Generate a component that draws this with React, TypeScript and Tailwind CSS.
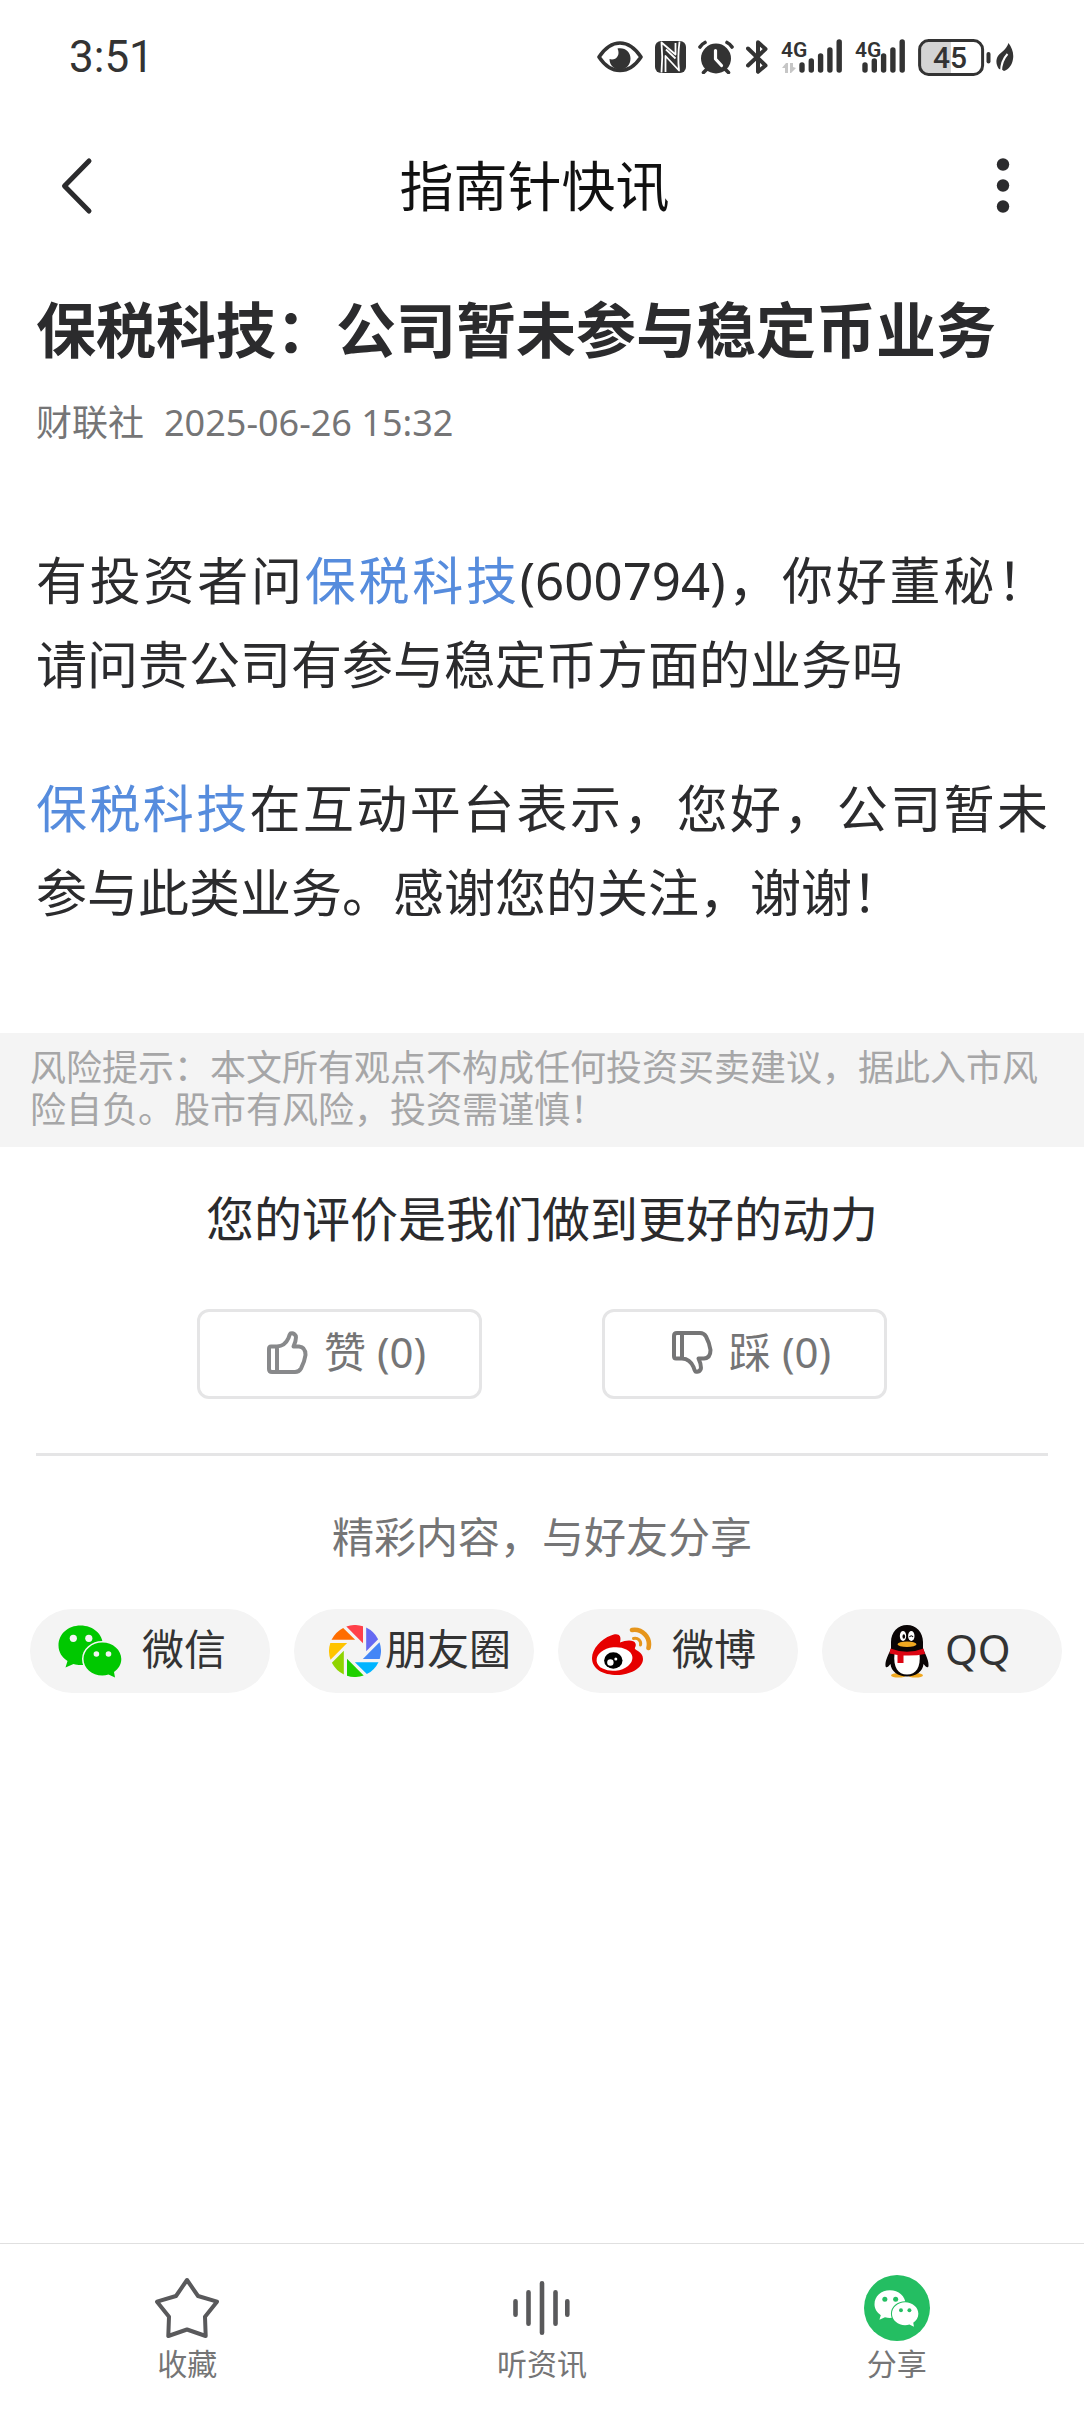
import type { ReactNode } from 'react'

const bladeColors = [
  '#ff4049',
  '#6669f2',
  '#4486f6',
  '#00b4ff',
  '#1fd000',
  '#8fd400',
  '#ffc400',
  '#ff6d00',
]

/* --- Status bar icons --- */

const EyeIcon = () => (
  <svg width="46" height="34" viewBox="598 40 46 34" fill="none" aria-hidden="true">
    <path
      d="M600 57 C606 48 613 43 621 43 S636 48 642 57 C636 66 629 70.500 621 70.500 S606 66 600 57Z"
      stroke="#333"
      strokeWidth="3.6"
      strokeLinejoin="round"
    />
    <path
      d="M618.500 48.500 C626 47 631.500 52 631.500 58.500 C631.500 65 627 69.500 621 69.500 C615 69.500 610.500 65 610.500 59 C616 61 622 56 618.500 48.500Z"
      fill="#333"
    />
  </svg>
)

const NfcIcon = () => (
  <svg width="31" height="32" viewBox="0 0 31 32" fill="none" aria-hidden="true">
    <rect width="31" height="32" rx="6" fill="#333" />
    <g stroke="#fff" strokeWidth="1.800" strokeLinejoin="round">
      <path d="M6.500 31.500 Q8 16 6.500 1.500 L20.500 13.500 V2" />
      <path d="M10.500 31 V15 L24 29.500 Q22.500 16 24.500 .5" />
      <path d="M11 8.500 L20.500 17.500" />
    </g>
  </svg>
)

const AlarmIcon = () => (
  <svg width="36" height="34" viewBox="699 39 36 34" fill="none" aria-hidden="true">
    <circle cx="717" cy="57.500" r="15" fill="#333" />
    <path
      d="M701 46 Q703 43 706 41.500 M728 41.500 Q731 43 733 46 M704.500 71.500 L708 68 M729.500 71.500 L726 68"
      stroke="#333"
      strokeWidth="3.6"
      strokeLinecap="round"
    />
    <path d="M716.500 49.500 V58 L722.500 64.500" stroke="#fff" strokeWidth="3.2" strokeLinecap="round" strokeLinejoin="round" />
  </svg>
)

const BluetoothIcon = () => (
  <svg width="23" height="34" viewBox="747 39 23 34" fill="none" aria-hidden="true">
    <path
      d="M749 47.500 L766.500 64.500 L759 70.800 V41.200 L766.500 48 L749 64.500"
      stroke="#333"
      strokeWidth="4"
      strokeLinecap="round"
      strokeLinejoin="round"
    />
  </svg>
)

const SignalIcon = ({ offset, arrows }: { offset: number; arrows?: boolean }) => (
  <svg
    className="overflow-visible"
    width={offset + 44}
    height="36"
    viewBox={`0 0 ${offset + 44} 36`}
    fill="none"
    aria-hidden="true"
  >
    <text x="0" y="18" fontFamily="Roboto" fontSize="21" fontWeight="600" fill="#333">
      4G
    </text>
    {arrows && (
      <path d="M1 29 L5 24 H7 V34 H4 V29Z M9 24 H12 V28 L15 29 L10 34 H9Z" fill="#c6c6c6" />
    )}
    <g stroke="#333" strokeWidth="5.400" strokeLinecap="round">
      {[26, 22, 17, 11, 3].map((top, i) => (
        <path key={top} d={`M${offset + 3 + i * 9.3} ${top} V31`} />
      ))}
    </g>
  </svg>
)

const BatteryIcon = () => (
  <svg width="74" height="37" viewBox="917 37 74 37" fill="none" aria-hidden="true">
    <path d="M950 40 H927 Q920 40 920 47 V64 Q920 72 927 72 H950Z" fill="#d4d4d4" />
    <rect x="918.600" y="38.600" width="63" height="33.800" rx="9" stroke="#333" strokeWidth="3" />
    <path d="M987.500 52 V59.500" stroke="#333" strokeWidth="4" strokeLinecap="round" />
    <text x="949" y="66" textAnchor="middle" fontFamily="Roboto" fontSize="30" fontWeight="500" fill="#333">
      45
    </text>
  </svg>
)

const LeafIcon = () => (
  <svg width="19" height="29" viewBox="996 41 19 29" fill="none" aria-hidden="true">
    <path
      d="M1008.500 41 C1012 46 1014 51 1013 57 C1012 63 1009 67 1004 69 L1002.500 68 L999 67 C996 63 995.500 58 998 54 C1001 50 1006 48 1008.500 41Z"
      fill="#333"
    />
    <path d="M1007.500 52 Q1001 59 1001 70" stroke="#fff" strokeWidth="2" />
  </svg>
)

/* --- Content icons --- */

const ThumbIcon = ({ color, down }: { color: string; down?: boolean }) => (
  <svg width="42" height="43" viewBox="0 0 42 43" fill="none" aria-hidden="true">
    <path
      transform={down ? 'matrix(1 0 0 -1 0 43)' : undefined}
      d="M11 15.500 H5 Q3 15.500 3 18 V38 Q3 41 6 41 H29 Q33 41 35 37.500 Q38.500 31 39.500 24 Q39.500 16 33 15.500 H27.500 Q30.500 9 29.800 5 Q28 1.500 24.500 2.500 Q23.500 3.500 22.500 7 Q19 15 11 15.500 V41"
      stroke={color}
      strokeWidth="4"
      strokeLinejoin="round"
    />
  </svg>
)

const WechatIcon = ({ color, gap, className }: { color: string; gap: string; className: string }) => (
  <svg className={className} viewBox="0 0 64 53" fill="none" aria-hidden="true">
    <path
      d="M22.500 .5 C35 .5 45 9 45 20.500 C45 32 35 40 22.500 40 C20 40 18 39.700 15.500 39 L7.500 42.500 L9.500 36 C4 32.500 .5 27 .5 20.500 C.5 9 10 .5 22.500 .5Z"
      fill={color}
    />
    <circle cx="15.300" cy="13.300" r="3.600" fill={gap} />
    <circle cx="30.800" cy="13.300" r="3.600" fill={gap} />
    <path
      d="M44.300 17.500 C55 17.500 63.300 25 63.300 34 C63.300 39.500 60.300 44 56 47 L57 52.500 L50.500 49.500 C48.500 50.200 46.500 50.500 44.300 50.500 C34 50.500 25.500 43 25.500 34 C25.500 25 34 17.500 44.300 17.500Z"
      fill={color}
      stroke={gap}
      strokeWidth="3"
      paintOrder="stroke"
    />
    <circle cx="38.400" cy="29" r="2.800" fill={gap} />
    <circle cx="50.500" cy="29" r="2.800" fill={gap} />
  </svg>
)

const MomentsIcon = () => (
  <svg width="52" height="52" viewBox="-26 -26 52 52" aria-hidden="true">
    {bladeColors.map((color, i) => (
      <path
        key={color}
        transform={`rotate(${i * 45})`}
        d="M8 -24.700 V-7.800 L-8.700 -24.500 A26 26 0 0 1 8 -24.700Z"
        fill={color}
      />
    ))}
  </svg>
)

const WeiboIcon = () => (
  <svg width="60" height="49" viewBox="0 0 60 49" fill="none" aria-hidden="true">
    <path
      d="M0 31 C0 22 9 12 19 8.500 C26 5.500 30 8 28 15.500 C34 13 42 12.500 43.500 16.500 C44.500 19 42.500 20.500 43 22 C44 23.500 51 25 51 32 C51 41 38 48 25 48 C11 48 0 42 0 31Z"
      fill="#e60000"
    />
    <ellipse cx="22.500" cy="32" rx="18" ry="11.700" transform="rotate(-6 22.500 32)" fill="#fff" />
    <ellipse cx="21.300" cy="33.500" rx="9.200" ry="8.200" fill="#000" />
    <circle cx="18.400" cy="35.500" r="3.200" fill="#fff" />
    <circle cx="23.800" cy="32" r="1.500" fill="#fff" />
    <path d="M40 3 C50 1.500 59 10 56.500 21" stroke="#e6951b" strokeWidth="4.600" strokeLinecap="round" />
    <path d="M41.500 11.500 C46 10.500 49.500 14 48.500 18" stroke="#e6951b" strokeWidth="3" strokeLinecap="round" />
  </svg>
)

const QqIcon = () => (
  <svg width="44" height="53" viewBox="0 0 44 53" fill="none" aria-hidden="true">
    <ellipse cx="13.500" cy="50.300" rx="7.500" ry="2.300" fill="#f0a820" />
    <ellipse cx="30.500" cy="50.300" rx="7.500" ry="2.300" fill="#f0a820" />
    <path
      d="M22 0 C31 0 38 7 38 17 V24 C41 30 44 36 43.500 41 C43 44 40 41 38.500 39 C38 46 31 51.500 22 51.500 C13 51.500 6 46 5.500 39 C4 41 1 44 .5 41 C0 36 3 30 6 24 V17 C6 7 13 0 22 0Z"
      fill="#0a0505"
    />
    <path d="M9.500 29 H34.500 C36 42 31 49.500 22 49.500 C13 49.500 8 42 9.500 29Z" fill="#fff" />
    <path d="M5.500 23.500 Q22 30 38.500 23.500 L40 29 Q31 31 18.500 30.500 V38 H12.500 V30 L4.500 28.500Z" fill="#dc0512" />
    <ellipse cx="18" cy="11" rx="3.200" ry="5" fill="#fff" />
    <ellipse cx="26.300" cy="11" rx="3.200" ry="5" fill="#fff" />
    <ellipse cx="18.800" cy="11.500" rx="1.300" ry="2.200" fill="#0a0505" />
    <path d="M24.500 12 Q26.300 9.500 28 12" stroke="#0a0505" strokeWidth="1.200" />
    <ellipse cx="22" cy="19.300" rx="9.500" ry="2.800" fill="#f0a820" />
  </svg>
)

const StarIcon = () => (
  <svg width="64" height="62" viewBox="0 0 64 62" fill="none" aria-hidden="true">
    <path
      d="M32 3 L43 19 L62 24.700 L50 39.700 L50.700 59 L32 52.500 L13.300 59 L14 39.700 L2 24.700 L21 19Z"
      stroke="#59595b"
      strokeWidth="4"
      strokeLinejoin="round"
    />
  </svg>
)

const ListenIcon = () => (
  <svg width="57" height="54" viewBox="0 0 57 54" aria-hidden="true">
    <g stroke="#59595b" strokeWidth="4.600" strokeLinecap="round">
      <path d="M2.500 20.300 V33.700 M15.500 11.300 V42.700 M29 2.300 V51.700 M42.500 11.300 V42.700 M54.300 20.300 V33.700" />
    </g>
  </svg>
)

/* --- Data --- */

const shareTargets = [
  { label: '微信', icon: <WechatIcon color="#00c800" gap="#f4f4f4" className="h-[53px] w-16" />, layout: 'pl-7 gap-5' },
  { label: '朋友圈', icon: <MomentsIcon />, layout: 'pl-[35px] gap-1' },
  { label: '微博', icon: <WeiboIcon />, layout: 'pl-[34px] gap-5' },
  { label: 'QQ', icon: <QqIcon />, layout: 'pl-[63px] gap-4' },
]

const tabs = [
  { label: '收藏', icon: <StarIcon /> },
  { label: '听资讯', icon: <ListenIcon /> },
  {
    label: '分享',
    icon: (
      <span className="flex size-[66px] items-center justify-center rounded-full bg-[#24be62]">
        <WechatIcon color="#fff" gap="#24be62" className="h-[37px] w-[45px]" />
      </span>
    ),
  },
]

const StockLink = ({ children }: { children: ReactNode }) => (
  <a href="#600794" className="text-[#568cdd]">
    {children}
  </a>
)

const VoteButton = ({ icon, children }: { icon: ReactNode; children: ReactNode }) => (
  <button
    type="button"
    className="flex h-[90px] w-[285px] items-center gap-4 rounded-xl border-3 border-[#e5e5e6] pb-1 pl-[66px] text-[42px] leading-[60px] text-[#757576]"
  >
    {icon}
    {children}
  </button>
)

export default function App() {
  return (
    <div
      lang="zh-CN"
      className="flex min-h-screen flex-col bg-white font-['Noto_Sans','Noto_Sans_CJK_SC',sans-serif] text-[#2b2b2d]"
    >
      {/* Status bar */}
      <div className="flex h-[114px] items-center justify-between px-[69px]">
        <span className="font-['Roboto',sans-serif] text-[44px] leading-[60px] text-[#333]">3:51</span>
        <div className="flex items-center gap-3">
          <EyeIcon />
          <NfcIcon />
          <AlarmIcon />
          <BluetoothIcon />
          <SignalIcon offset={18} arrows />
          <SignalIcon offset={7} />
          <div className="flex items-center gap-1">
            <BatteryIcon />
            <LeafIcon />
          </div>
        </div>
      </div>

      <header className="flex h-36 items-center pl-[60px] pr-[66px]">
        <button type="button" aria-label="返回" className="flex w-[60px]">
          <svg width="34" height="58" viewBox="60 156 34 58" fill="none" aria-hidden="true">
            <path
              d="M89 160 L64.500 185 L89 210"
              stroke="#2b2b2d"
              strokeWidth="5"
              strokeLinecap="round"
              strokeLinejoin="round"
            />
          </svg>
        </button>
        <h1 className="flex-1 text-center text-[54px] leading-[72px] text-[#111]">指南针快讯</h1>
        <button type="button" aria-label="更多" className="flex w-[69px] justify-end pr-2">
          <svg width="14" height="56" viewBox="0 0 14 56" fill="#2b2b2d" aria-hidden="true">
            <circle cx="7" cy="6.500" r="6.200" />
            <circle cx="7" cy="27.500" r="6.200" />
            <circle cx="7" cy="48.500" r="6.200" />
          </svg>
        </button>
      </header>

      <main>
        <article className="px-9 pt-[30px]">
          <h2 className="text-[60px] font-bold leading-[84px]">保税科技：公司暂未参与稳定币业务</h2>
          <div className="mt-[30px] flex gap-5 text-[36px] leading-[42px] text-[#757576]">
            <span>财联社</span>
            <time dateTime="2025-06-26T15:32">2025-06-26 15:32</time>
          </div>
          <div className="mt-[94px] space-y-[60px] text-justify text-[51px] leading-[84px]">
            <p>
              有投资者问<StockLink>保税科技</StockLink>(600794)，你好董秘！请问贵公司有参与稳定币方面的业务吗
            </p>
            <p>
              <StockLink>保税科技</StockLink>在互动平台表示，您好，公司暂未参与此类业务。感谢您的关注，谢谢！
            </p>
          </div>
        </article>

        <p className="mt-[99px] bg-[#f4f4f4] px-[30px] pb-4 pt-[14px] text-[36px] leading-[42px] text-[#a6a6a7]">
          风险提示：本文所有观点不构成任何投资买卖建议，据此入市风险自负。股市有风险，投资需谨慎！
        </p>

        {/* Feedback */}
        <section className="px-9">
          <h3 className="mt-[42px] text-center text-[48px] leading-[60px]">您的评价是我们做到更好的动力</h3>
          <div className="mt-[60px] flex justify-center gap-[120px]">
            <VoteButton icon={<ThumbIcon color="#88898b" />}>赞 (0)</VoteButton>
            <VoteButton icon={<ThumbIcon color="#757576" down />}>踩 (0)</VoteButton>
          </div>
          <hr className="mt-[54px] border-t-3 border-[#e5e5e6]" />
        </section>

        {/* Share */}
        <section>
          <h3 className="mt-[51px] text-center text-[42px] leading-[60px] text-[#757576]">精彩内容，与好友分享</h3>
          <div className="mt-[42px] grid grid-cols-4 gap-6 pl-[30px] pr-[22px]">
            {shareTargets.map((target) => (
              <button
                key={target.label}
                type="button"
                className={`flex h-[84px] items-center rounded-full bg-[#f4f4f4] text-[42px] leading-[60px] text-[#333] ${target.layout}`}
              >
                {target.icon}
                <span className="pb-1">{target.label}</span>
              </button>
            ))}
          </div>
        </section>
      </main>

      <nav className="mt-auto grid grid-cols-3 border-t border-[#e0e0e0] px-[10px] pb-[30px] pt-[31px]">
        {tabs.map((tab) => (
          <button
            key={tab.label}
            type="button"
            className="flex flex-col items-center gap-[5px] text-[30px] leading-[36px] text-[#757576]"
          >
            <span className="flex h-[66px] items-center">{tab.icon}</span>
            {tab.label}
          </button>
        ))}
      </nav>
    </div>
  )
}
